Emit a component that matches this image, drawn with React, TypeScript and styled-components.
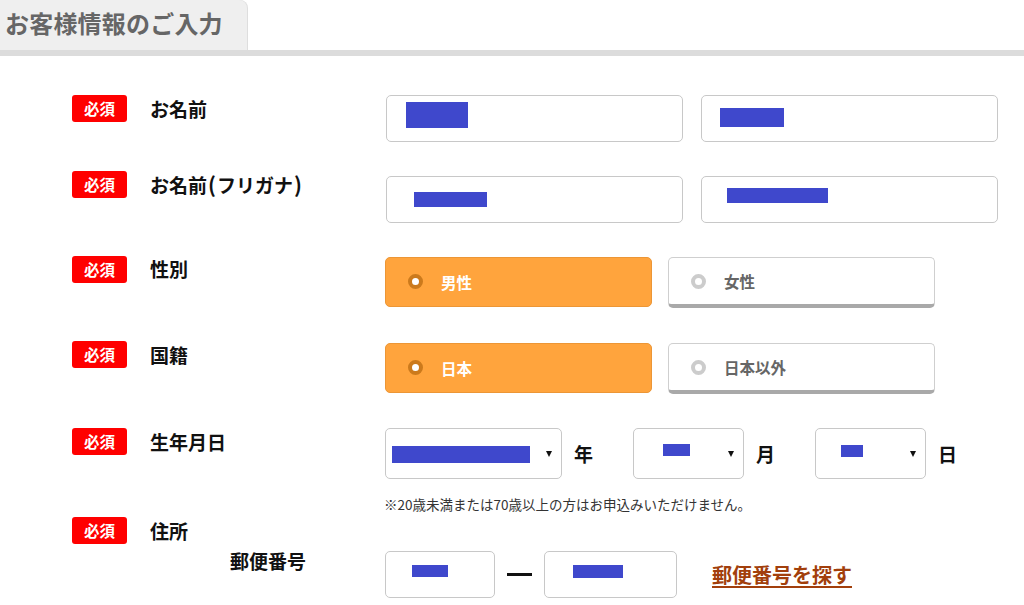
import React, { FC } from 'react';
import styled, { createGlobalStyle } from 'styled-components';

const GlobalStyle = createGlobalStyle`
  body {
    margin: 0;
    background: #fff;
    font-family: 'Noto Sans CJK JP', 'Noto Sans', sans-serif;
    color: #111;
  }
`;

const Header = styled.div`
  display: flex;
  border-bottom: 6px solid #dcdcdc;
`;

const Tab = styled.div`
  width: 247px;
  height: 50px;
  box-sizing: border-box;
  padding-left: 5px;
  background: #efefef;
  border-top-right-radius: 8px;
  box-shadow: 1px 0 0 #dedede;
  color: #666;
  font-size: 24px;
  font-weight: bold;
  line-height: 46px;
  letter-spacing: 0.2px;
`;

const Form = styled.div`
  padding: 39px 0 0 72px;
`;

interface RowProps {
  $gap: number;
}

const Row = styled.div`
  display: grid;
  grid-template-columns: 55px 258px 1fr;
  align-items: start;
  margin-bottom: ${(props: RowProps) => props.$gap}px;
`;

const Badge = styled.div`
  width: 55px;
  height: 27px;
  border-radius: 3px;
  background: #ff0000;
  color: #fff;
  font-size: 15.5px;
  font-weight: bold;
  line-height: 27px;
  text-align: center;
`;

const Label = styled.div`
  margin-left: 23px;
  font-size: 19px;
  font-weight: bold;
  line-height: 27px;
  white-space: nowrap;
`;

const Paren = styled.span`
  font-size: 21px;
  margin: 0 1px;
`;

interface FieldsProps {
  $top?: number;
  $gap: number;
}

const Fields = styled.div`
  display: flex;
  align-items: center;
  gap: ${(props: FieldsProps) => props.$gap}px;
  margin-top: ${(props: FieldsProps) => props.$top || 0}px;
`;

const FieldColumn = styled.div`
  display: flex;
  flex-direction: column;
  gap: 17px;
`;

interface BoxProps {
  $w: number;
  $h: number;
}

const TextBox = styled.div`
  position: relative;
  box-sizing: border-box;
  width: ${(props: BoxProps) => props.$w}px;
  height: ${(props: BoxProps) => props.$h}px;
  border: 1px solid #c8c8c8;
  border-radius: 5px;
  background: #fff;
`;

interface RedactProps {
  $l: number;
  $t: number;
  $w: number;
  $h: number;
}

const Redact = styled.span`
  position: absolute;
  left: ${(props: RedactProps) => props.$l}px;
  top: ${(props: RedactProps) => props.$t}px;
  width: ${(props: RedactProps) => props.$w}px;
  height: ${(props: RedactProps) => props.$h}px;
  background: #3f48cc;
`;

const Arrow = styled.span`
  position: absolute;
  right: 9px;
  top: 50%;
  margin-top: -3px;
  width: 0;
  height: 0;
  border-left: 3.5px solid transparent;
  border-right: 3.5px solid transparent;
  border-top: 6px solid #111;
`;

interface ChoiceProps {
  $on: boolean;
}

const Choice = styled.div`
  display: flex;
  align-items: center;
  box-sizing: border-box;
  width: 267px;
  height: ${(props: ChoiceProps) => (props.$on ? '50px' : '51px')};
  margin-top: ${(props: ChoiceProps) => (props.$on ? '0' : '2px')};
  padding-left: 22px;
  border: 1px solid ${(props: ChoiceProps) => (props.$on ? '#ec9636' : '#cfcfcf')};
  border-bottom: ${(props: ChoiceProps) =>
    props.$on ? '1px solid #ec9636' : '4px solid #a9a9a9'};
  border-radius: 5px;
  background: ${(props: ChoiceProps) => (props.$on ? '#ffa43d' : '#fff')};
  color: ${(props: ChoiceProps) => (props.$on ? '#fff' : '#666')};
  font-size: 15.5px;
  font-weight: bold;
`;

const Dot = styled.span`
  box-sizing: border-box;
  width: 15px;
  height: 15px;
  margin-right: 18px;
  border-radius: 50%;
  border: 4px solid ${(props: ChoiceProps) => (props.$on ? '#cc7a1c' : '#cccccc')};
  background: #fff;
`;

const Unit = styled.span`
  font-size: 19px;
  font-weight: bold;
  margin: 0 27px 0 -1px;
`;

const Note = styled.div`
  font-size: 13.5px;
  line-height: 17px;
  color: #333;
  margin-left: -1px;
`;

const SubLabel = styled.div`
  grid-column: 1 / 3;
  padding-left: 158px;
  font-size: 19px;
  font-weight: bold;
  line-height: 27px;
`;

const Dash = styled.span`
  display: block;
  width: 25px;
  height: 3px;
  background: #111;
`;

const ZipLink = styled.a`
  margin-left: 23px;
  color: #a23f0c;
  font-size: 20px;
  font-weight: bold;
  text-decoration: underline;
  text-underline-offset: 3px;
`;

interface ChoicePairProps {
  on: string;
  off: string;
}

const ChoicePair: FC<ChoicePairProps> = ({ on, off }) => (
  <Fields $gap={16}>
    <Choice $on>
      <Dot $on />
      {on}
    </Choice>
    <Choice $on={false}>
      <Dot $on={false} />
      {off}
    </Choice>
  </Fields>
);

const App: FC = () => {
  return (
    <>
      <GlobalStyle />
      <Header>
        <Tab>お客様情報のご入力</Tab>
      </Header>
      <Form>
        <Row $gap={29}>
          <Badge>必須</Badge>
          <Label>お名前</Label>
          <Fields $gap={18}>
            <TextBox $w={297} $h={47} style={{ marginLeft: 1 }}>
              <Redact $l={19} $t={6} $w={62} $h={26} />
            </TextBox>
            <TextBox $w={297} $h={47}>
              <Redact $l={18} $t={12} $w={64} $h={19} />
            </TextBox>
          </Fields>
        </Row>
        <Row $gap={32}>
          <Badge>必須</Badge>
          <Label>
            お名前<Paren>(</Paren>フリガナ<Paren>)</Paren>
          </Label>
          <Fields $gap={18} $top={5}>
            <TextBox $w={297} $h={47} style={{ marginLeft: 1 }}>
              <Redact $l={27} $t={15} $w={73} $h={15} />
            </TextBox>
            <TextBox $w={297} $h={47}>
              <Redact $l={25} $t={11} $w={101} $h={15} />
            </TextBox>
          </Fields>
        </Row>
        <Row $gap={33}>
          <Badge style={{ marginTop: 1 }}>必須</Badge>
          <Label>性別</Label>
          <ChoicePair on="男性" off="女性" />
        </Row>
        <Row $gap={34}>
          <Badge>必須</Badge>
          <Label>国籍</Label>
          <ChoicePair on="日本" off="日本以外" />
        </Row>
        <Row $gap={4}>
          <Badge>必須</Badge>
          <Label>生年月日</Label>
          <FieldColumn>
            <Fields $gap={13}>
              <TextBox $w={177} $h={51}>
                <Redact $l={6} $t={17} $w={138} $h={17} />
                <Arrow />
              </TextBox>
              <Unit>年</Unit>
              <TextBox $w={111} $h={51}>
                <Redact $l={29} $t={15} $w={27} $h={12} />
                <Arrow />
              </TextBox>
              <Unit>月</Unit>
              <TextBox $w={111} $h={51}>
                <Redact $l={25} $t={16} $w={22} $h={12} />
                <Arrow />
              </TextBox>
              <Unit>日</Unit>
            </Fields>
            <Note>※20歳未満または70歳以上の方はお申込みいただけません。</Note>
          </FieldColumn>
        </Row>
        <Row $gap={3}>
          <Badge>必須</Badge>
          <Label>住所</Label>
        </Row>
        <Row $gap={0}>
          <SubLabel>郵便番号</SubLabel>
          <Fields $gap={12} $top={4}>
            <TextBox $w={110} $h={47}>
              <Redact $l={26} $t={13} $w={36} $h={12} />
            </TextBox>
            <Dash />
            <TextBox $w={133} $h={47}>
              <Redact $l={28} $t={13} $w={50} $h={13} />
            </TextBox>
            <ZipLink href="#">郵便番号を探す</ZipLink>
          </Fields>
        </Row>
      </Form>
    </>
  );
};

export default App;
